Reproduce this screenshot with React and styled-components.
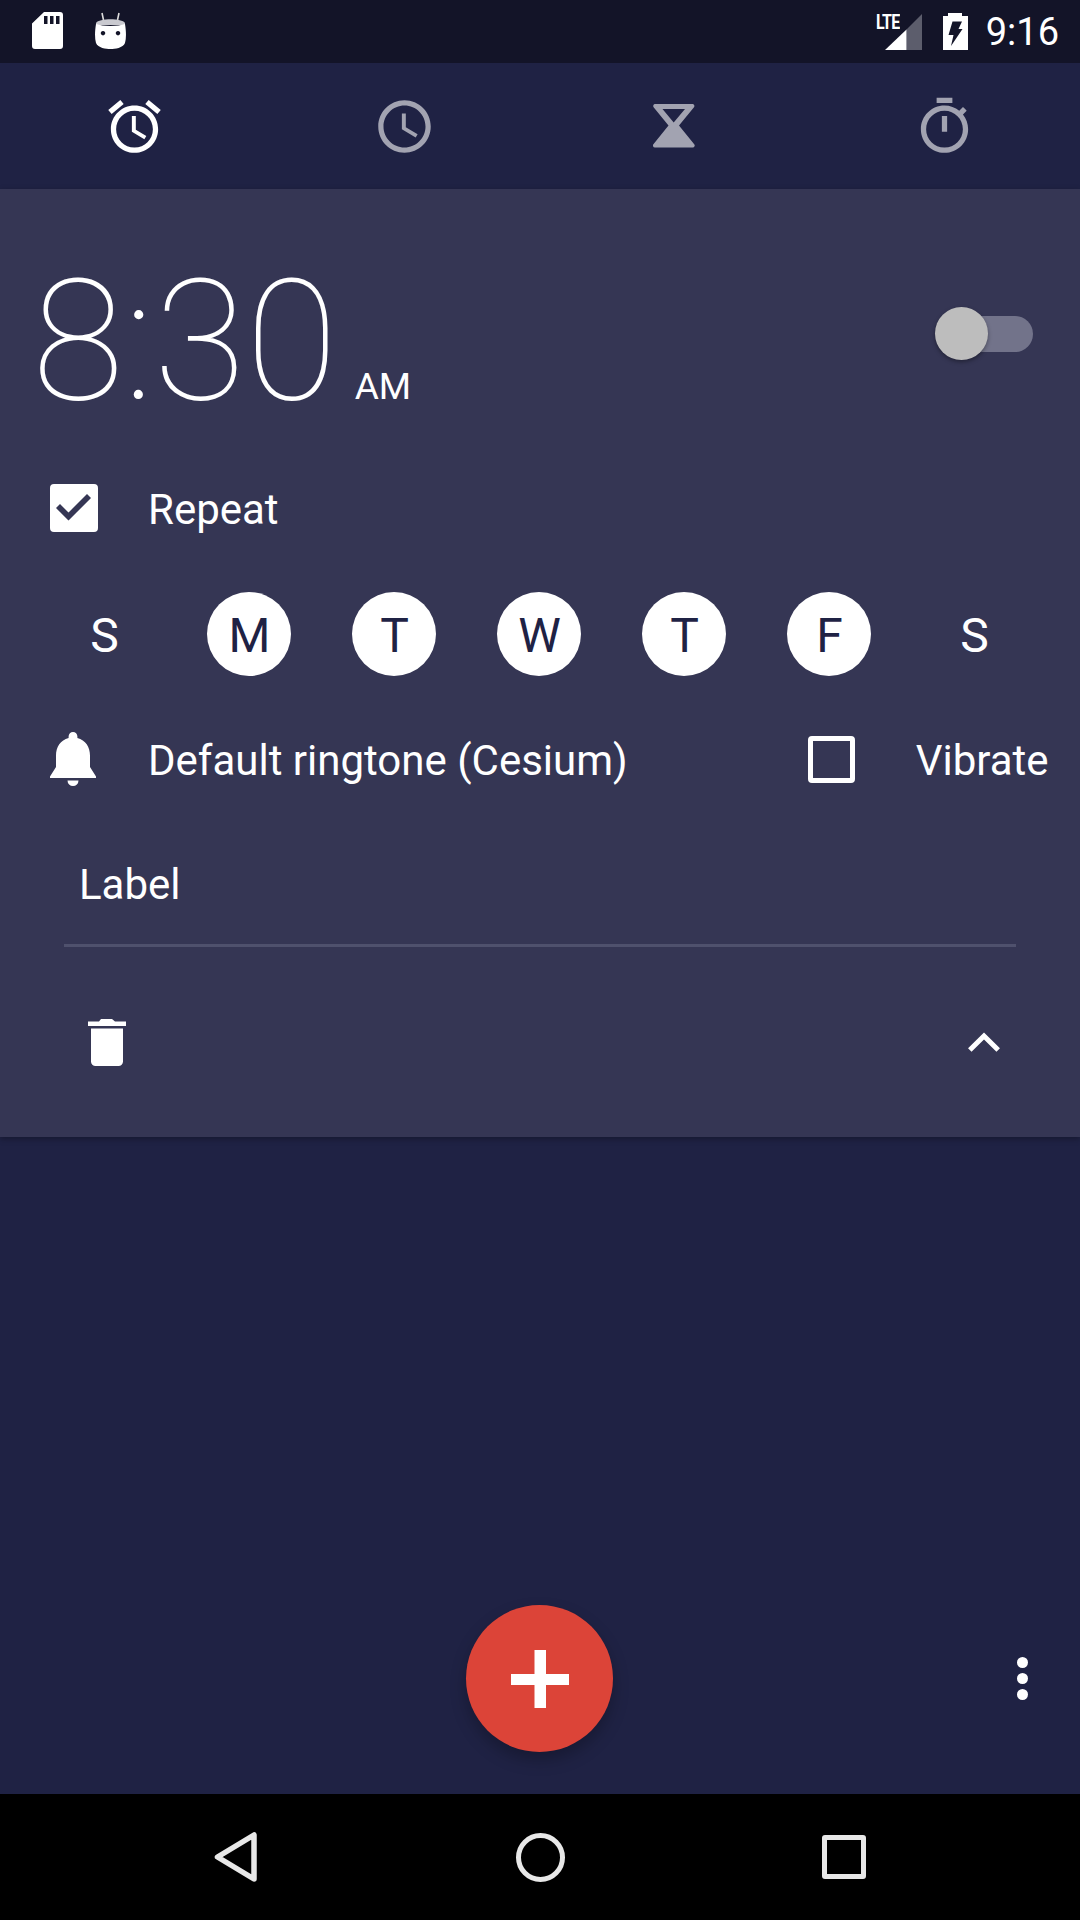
import styled, { createGlobalStyle } from "styled-components";

const GlobalStyle = createGlobalStyle`
  html, body {
    margin: 0;
    padding: 0;
    background: #1f2244;
  }
  * {
    box-sizing: border-box;
  }
`

const days = [
  { letter: "S", on: false },
  { letter: "M", on: true },
  { letter: "T", on: true },
  { letter: "W", on: true },
  { letter: "T", on: true },
  { letter: "F", on: true },
  { letter: "S", on: false },
]

export default function App() {
  return (
    <Screen>
      <GlobalStyle />
      <StatusBar>
        <StatusLeft>
          <svg width="31" height="37" viewBox="0 0 31 37">
            <path fillRule="evenodd" fill="#fff" d="M12 0H28a3 3 0 0 1 3 3V34a3 3 0 0 1-3 3H3a3 3 0 0 1-3-3V11.5ZM12 4V12H15.5V4ZM18 4V12H21.5V4ZM24 4V12H27.5V4Z" />
          </svg>
          <svg width="31" height="37" viewBox="0 0 31 37">
            <path stroke="#ddd" strokeWidth="1.6" d="M7 1L8.5 8M24 1L22.5 8" />
            <path fill="#c9c9cf" d="M1 11C4 6 27 6 30 11V13H1Z" />
            <path fillRule="evenodd" fill="#fff" d="M1 12C8 14.5 23 14.5 30 12C31.3 20 31.3 26 30 31C28 36 20 37 15.5 37C11 37 3 36 1 31C-.3 26-.3 20 1 12ZM8 19a2.2 2.2 0 1 0 .01 0ZM23 19a2.2 2.2 0 1 0 .01 0Z" />
          </svg>
        </StatusLeft>
        <StatusRight>
          <SignalWrap>
            <LteText>LTE</LteText>
            <svg width="37" height="36" viewBox="0 0 37 36">
              <path fill="#5c5d6c" d="M37 0V36H21.5V15.5Z" />
              <path fill="#fff" d="M0 36L21.5 15.5V36Z" />
            </svg>
          </SignalWrap>
          <svg width="25" height="37" viewBox="0 0 25 37">
            <path fillRule="evenodd" fill="#fff" d="M5 0H19V3H25V37H0V3H5ZM9.500 8.500L5.500 22H10.500L8 33 19.500 16H15.500L19 8.500Z" />
          </svg>
          <ClockText>9:16</ClockText>
        </StatusRight>
      </StatusBar>

      <Tabs>
        <Tab>
          <svg width="63" height="63" viewBox="0 0 24 24" fill="#fff">
            <path d="M22 5.72l-4.6-3.86-1.29 1.53 4.6 3.86L22 5.72zM7.88 3.39L6.6 1.86 2 5.71l1.29 1.53 4.59-3.85zM12.5 8H11v6l4.75 2.85.75-1.23-4-2.37V8zM12 4c-4.97 0-9 4.03-9 9s4.03 9 9 9 9-4.03 9-9-4.03-9-9-9zm0 16c-3.87 0-7-3.13-7-7s3.13-7 7-7 7 3.13 7 7-3.13 7-7 7z" />
          </svg>
        </Tab>
        <Tab>
          <svg width="63" height="63" viewBox="0 0 24 24" fill="#a2a3b1">
            <path d="M11.99 2C6.47 2 2 6.48 2 12s4.47 10 9.99 10C17.52 22 22 17.52 22 12S17.52 2 11.99 2zM12 20c-4.42 0-8-3.58-8-8s3.58-8 8-8 8 3.58 8 8-3.58 8-8 8zM12.5 7H11v6l5.25 3.15.75-1.23-4.5-2.67z" />
          </svg>
        </Tab>
        <Tab>
          <svg width="42" height="44" viewBox="0 0 42 44" fill="#a2a3b1">
            <path fillRule="evenodd" d="M2 0H39.5A2 2 0 0 1 41 3.2L26 21.5 41 40A2 2 0 0 1 39.5 43.5H2A2 2 0 0 1 .6 40L15.5 21.5.6 3.2A2 2 0 0 1 2 0ZM9.5 5L20.7 18.5 32 5Z" />
          </svg>
        </Tab>
        <Tab>
          <svg width="63" height="63" viewBox="0 0 24 24" fill="#a2a3b1">
            <path d="M15 1H9v2h6V1zm-4 13h2V8h-2v6zm8.03-6.61l1.42-1.42c-.43-.51-.9-.99-1.41-1.41l-1.42 1.42C16.07 4.74 14.12 4 12 4c-4.97 0-9 4.03-9 9s4.02 9 9 9 9-4.03 9-9c0-2.12-.74-4.07-1.97-5.61zM12 20c-3.87 0-7-3.13-7-7s3.13-7 7-7 7 3.13 7 7-3.13 7-7 7z" />
          </svg>
        </Tab>
      </Tabs>

      <Card>
        <TimeRow>
          <Time>
            <Digits>8:30</Digits>
            <Meridiem>AM</Meridiem>
          </Time>
          <Toggle>
            <Thumb />
          </Toggle>
        </TimeRow>

        <RepeatRow>
          <CheckSlot>
            <svg width="48" height="48" viewBox="0 0 48 48">
              <path fillRule="evenodd" fill="#fff" d="M4 0H44a4 4 0 0 1 4 4V44a4 4 0 0 1-4 4H4a4 4 0 0 1-4-4V4a4 4 0 0 1 4-4ZM6 24L18.5 36.5 41 14 37 10 18.5 28.5 10 20Z" />
            </svg>
          </CheckSlot>
          <RowText>Repeat</RowText>
        </RepeatRow>

        <DaysRow>
          {days.map((day, index) => (
            <DayCell key={index}>
              <Day $on={day.on}>{day.letter}</Day>
            </DayCell>
          ))}
        </DaysRow>

        <RingRow>
          <CheckSlot>
            <svg width="46" height="54" viewBox="0 0 46 54" fill="#fff">
              <path d="M23 0a4.4 4.4 0 0 1 4.4 4.4V6C35.500 8 40 15 40 23.500V35L46 44.500V46H0V44.500L6 35V23.500C6 15 10.500 8 18.600 6V4.400A4.400 4.400 0 0 1 23 0ZM17.500 48.500H28.500A5.500 5.500 0 0 1 17.500 48.500Z" />
            </svg>
          </CheckSlot>
          <RowText>Default ringtone (Cesium)</RowText>
          <VibrateBox />
          <RowText>Vibrate</RowText>
        </RingRow>

        <LabelField>Label</LabelField>

        <ActionsRow>
          <svg width="38" height="47" viewBox="0 0 38 47" fill="#fff">
            <path d="M13 0H24L27 2.500H38V7H0V2.500H11ZM3 9.500H35V42.500A4.500 4.500 0 0 1 30.500 47H7.500A4.500 4.500 0 0 1 3 42.500Z" />
          </svg>
          <svg width="32" height="20" viewBox="0 0 32 20">
            <path fill="none" stroke="#fff" strokeWidth="5" d="M1.800 18L16 4 30.200 18" />
          </svg>
        </ActionsRow>
      </Card>

      <Main>
        <FabRow>
          <span />
          <Fab>
            <svg width="58" height="58" viewBox="0 0 58 58" fill="#fff">
              <path d="M23.500 0H35V24H58V35H35V58H23.500V35H0V24H23.500Z" />
            </svg>
          </Fab>
          <MoreButton>
            <MoreDot />
            <MoreDot />
            <MoreDot />
          </MoreButton>
        </FabRow>
      </Main>

      <NavBar>
        <svg width="44" height="50" viewBox="0 0 44 50">
          <path fill="none" stroke="#e8e8e8" strokeWidth="5.500" strokeLinejoin="round" d="M3.500 25L40 3V47Z" />
        </svg>
        <HomeRing />
        <RecentBox />
      </NavBar>
    </Screen>
  )
}

const Screen = styled.div`
  width: 1080px;
  height: 1920px;
  display: flex;
  flex-direction: column;
  overflow: hidden;
  background-color: #1f2244;
  color: #fff;
  font-family: Roboto, "Liberation Sans", sans-serif;
`
const StatusBar = styled.header`
  height: 63px;
  flex: none;
  display: flex;
  align-items: center;
  justify-content: space-between;
  padding: 0 21px 0 32px;
  background-color: #131428;
`
const StatusLeft = styled.div`
  display: flex;
  align-items: center;
  gap: 32px;
  margin-top: -2px;
`
const StatusRight = styled.div`
  display: flex;
  align-items: center;
`
const SignalWrap = styled.div`
  position: relative;
  display: flex;
  margin-right: 21px;
`
const LteText = styled.span`
  position: absolute;
  left: -9px;
  top: -2px;
  font-size: 20px;
  line-height: 20px;
  font-weight: 700;
  letter-spacing: -1px;
  transform: scaleX(0.8);
  transform-origin: left;
`
const ClockText = styled.span`
  margin-left: 18px;
  font-size: 38px;
  line-height: 44px;
  font-weight: 400;
`
const Tabs = styled.nav`
  height: 126px;
  flex: none;
  display: grid;
  grid-template-columns: repeat(4, 1fr);
  background-color: #1f2244;
`
const Tab = styled.div`
  display: flex;
  align-items: center;
  justify-content: center;
  padding-right: 2px;
`
const Card = styled.section`
  height: 948px;
  flex: none;
  display: flex;
  flex-direction: column;
  background-color: #353654;
  box-shadow: 0 2px 6px rgba(0, 0, 0, 0.3);
  position: relative;
`
const TimeRow = styled.div`
  height: 270px;
  flex: none;
  display: flex;
  align-items: flex-start;
  justify-content: space-between;
  padding: 0 47px 0 32px;
`
const Time = styled.div`
  display: flex;
  align-items: baseline;
  margin-top: 53px;
`
const Digits = styled.span`
  font-size: 168px;
  line-height: 200px;
  font-weight: 100;
`
const Meridiem = styled.span`
  margin-left: 17px;
  font-size: 37px;
  font-weight: 400;
`
const Toggle = styled.div`
  position: relative;
  width: 88px;
  height: 36px;
  margin-top: 127px;
  border-radius: 18px;
  background-color: #72738a;
`
const Thumb = styled.div`
  position: absolute;
  left: -10px;
  top: -9px;
  width: 53px;
  height: 53px;
  border-radius: 50%;
  background-color: #bdbdbd;
  box-shadow: 0 2px 4px rgba(0, 0, 0, 0.35);
`
const RepeatRow = styled.div`
  height: 98px;
  flex: none;
  display: flex;
  align-items: center;
  padding-left: 50px;
`
const CheckSlot = styled.div`
  width: 98px;
  flex: none;
  display: flex;
  align-items: center;
`
const RowText = styled.span`
  padding-top: 3px;
  font-size: 42px;
  line-height: 48px;
  font-weight: 400;
`
const DaysRow = styled.div`
  height: 154px;
  flex: none;
  display: grid;
  grid-template-columns: repeat(7, 145px);
  padding-left: 31px;
  align-items: center;
`
const DayCell = styled.div`
  display: flex;
  justify-content: center;
`
const Day = styled.div`
  width: 84px;
  height: 84px;
  padding: 2px 0 0 2px;
  display: flex;
  align-items: center;
  justify-content: center;
  border-radius: 50%;
  font-size: 48px;
  background-color: ${props => (props.$on ? "#fff" : "transparent")};
  color: ${props => (props.$on ? "#1f2244" : "#fff")};
`
const RingRow = styled.div`
  height: 96px;
  flex: none;
  display: flex;
  align-items: center;
  padding-left: 50px;
`
const VibrateBox = styled.div`
  width: 47px;
  height: 47px;
  margin-left: 180px;
  margin-right: 61px;
  border: 5px solid #fff;
  border-radius: 4px;
`
const LabelField = styled.div`
  height: 140px;
  flex: none;
  margin: 0 64px;
  padding: 54px 15px 0;
  font-size: 42px;
  line-height: 48px;
  border-bottom: 3px solid #4f516d;
`
const ActionsRow = styled.div`
  flex: 1;
  display: flex;
  align-items: center;
  justify-content: space-between;
  padding: 0 80px 0 88px;
`
const Main = styled.main`
  flex: 1;
  display: flex;
  flex-direction: column;
  justify-content: flex-end;
  padding: 0 0 42px;
`
const FabRow = styled.div`
  display: grid;
  grid-template-columns: 1fr auto 1fr;
  align-items: center;
  padding-right: 1px;
`
const Fab = styled.button`
  width: 147px;
  height: 147px;
  padding: 0;
  border: none;
  border-radius: 50%;
  display: flex;
  align-items: center;
  justify-content: center;
  background-color: #dc4438;
  box-shadow: 0 8px 16px rgba(0, 0, 0, 0.25);
`
const MoreButton = styled.div`
  justify-self: end;
  margin-right: 51px;
  display: flex;
  flex-direction: column;
  gap: 5px;
`
const MoreDot = styled.span`
  display: block;
  width: 11px;
  height: 11px;
  border-radius: 50%;
  background-color: #fff;
`
const NavBar = styled.footer`
  height: 126px;
  flex: none;
  display: grid;
  grid-template-columns: repeat(3, 304px);
  justify-content: center;
  justify-items: center;
  align-items: center;
  background-color: #000;
`
const HomeRing = styled.div`
  width: 49px;
  height: 49px;
  border: 5px solid #e8e8e8;
  border-radius: 50%;
`
const RecentBox = styled.div`
  width: 44px;
  height: 44px;
  border: 5px solid #e8e8e8;
  border-radius: 3px;
`
